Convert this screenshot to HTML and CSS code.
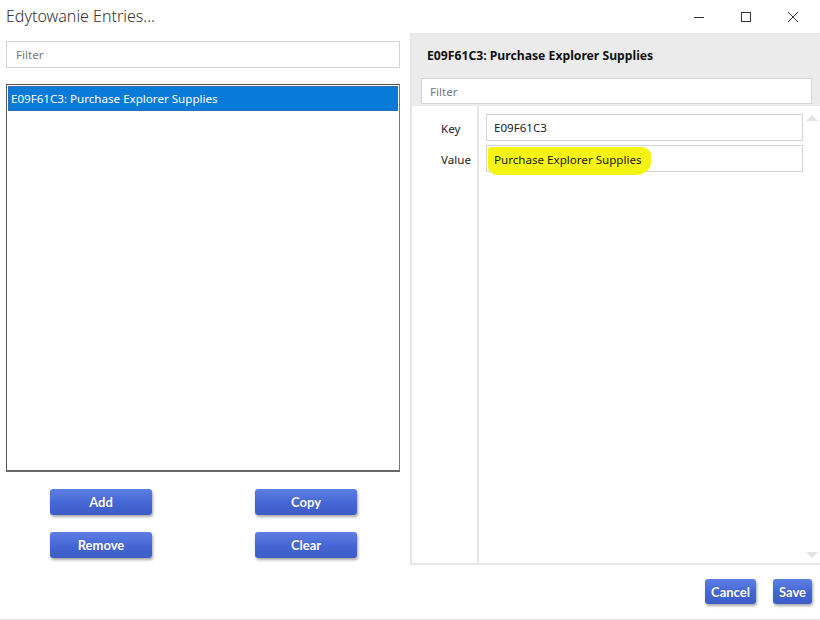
FILE: index.html
```html
<!DOCTYPE html>
<html>
<head>
<meta charset="utf-8">
<link rel="stylesheet" href="styles.css">
</head>
<body>
<div class="window">
  <div class="titlebar">
    <div class="title">Edytowanie Entries...</div>
    <div class="controls">
      <span class="ctl"><svg width="12" height="12" viewBox="0 0 12 12"><path d="M1 6.5h10" stroke="#333" stroke-width="1" fill="none"/></svg></span>
      <span class="ctl"><svg width="12" height="12" viewBox="0 0 12 12"><rect x="1.5" y="1.5" width="9" height="9" stroke="#333" stroke-width="1" fill="none"/></svg></span>
      <span class="ctl"><svg width="12" height="12" viewBox="0 0 12 12"><path d="M1 1L11 11M11 1L1 11" stroke="#333" stroke-width="1" fill="none"/></svg></span>
    </div>
  </div>
  <div class="main">
    <div class="left">
      <div class="input filter">Filter</div>
      <div class="listbox">
        <div class="row selected">E09F61C3: Purchase Explorer Supplies</div>
      </div>
      <div class="btngrid">
        <button class="btn">Add</button>
        <button class="btn">Copy</button>
        <button class="btn">Remove</button>
        <button class="btn">Clear</button>
      </div>
    </div>
    <div class="right">
      <div class="panel">
        <div class="phead">
          <div class="ptitle">E09F61C3: Purchase Explorer Supplies</div>
          <div class="input pfilter">Filter</div>
        </div>
        <div class="grid">
          <div class="labels">
            <div class="lab">Key</div>
            <div class="lab">Value</div>
          </div>
          <div class="values">
            <div class="input val">E09F61C3</div>
            <div class="input val"><span class="hl">Purchase Explorer Supplies</span></div>
          </div>
          <div class="scroll">
            <span class="tri up"></span>
            <span class="tri down"></span>
          </div>
        </div>
      </div>
      <div class="footer">
        <button class="btn sm">Cancel</button>
        <button class="btn sm">Save</button>
      </div>
    </div>
  </div>
</div>
</body>
</html>
```
FILE: styles.css
```css
html, body {
  margin: 0;
  padding: 0;
  background: #fff;
}
body {
  width: 820px;
  height: 620px;
  overflow: hidden;
  font-family: "Noto Sans", "Open Sans", sans-serif;
  color: #222;
}
.window {
  width: 820px;
  height: 619px;
  border-bottom: 1px solid #e4e4e4;
  display: flex;
  flex-direction: column;
}
.titlebar {
  height: 33px;
  display: flex;
  align-items: center;
  justify-content: space-between;
}
.title {
  padding-left: 6px;
  font-size: 16px;
  color: #333;
  font-weight: 300;
  margin-top: -1px;
}
.controls {
  display: flex;
  margin-right: 4px;
}
.ctl {
  width: 47px;
  height: 33px;
  display: flex;
  align-items: center;
  justify-content: center;
}
.main {
  flex: 1;
  display: flex;
}
.left {
  width: 394px;
  padding: 8px 10px 0 6px;
  display: flex;
  flex-direction: column;
}
.input {
  background: #fff;
  border: 1px solid #d4d4d4;
  box-sizing: border-box;
  font-size: 11.6px;
  display: flex;
  align-items: center;
  padding-left: 9px;
}
.filter {
  height: 27px;
  color: #777;
}
.listbox {
  margin-top: 16px;
  height: 388px;
  box-sizing: border-box;
  border: 1px solid #555;
  border-right-color: #777;
  border-bottom: 2px solid #666;
  padding: 1px;
}
.row {
  height: 23px;
  font-size: 11.6px;
  display: flex;
  align-items: center;
  padding-left: 2px;
}
.selected {
  background: #0a7ad8;
  color: #fff;
  border: 1px solid #2b6fb8;
}
.btngrid {
  display: grid;
  grid-template-columns: 102px 102px;
  justify-content: space-between;
  row-gap: 17px;
  padding: 17px 43px 0 44px;
}
.btn {
  height: 26px;
  border: none;
  border-radius: 3px;
  background: linear-gradient(#5d7fe3, #4466d3 55%, #3d5cc6);
  color: #fff;
  font-family: Lato, "Noto Sans", sans-serif;
  font-weight: bold;
  font-size: 13px;
  box-shadow: 1px 2px 3px rgba(0,0,0,0.35);
  padding: 0;
  text-shadow: 0 0 1px rgba(0,0,0,0.2);
}
.right {
  flex: 1;
  display: flex;
  flex-direction: column;
}
.panel {
  height: 532px;
  box-sizing: border-box;
  border-left: 2px solid #e6e6e6;
  border-top: 1px solid #e6e6e6;
  border-bottom: 2px solid #e6e6e6;
  display: flex;
  flex-direction: column;
}
.phead {
  background: #ebebeb;
  padding: 13px 8px 1px 9px;
  height: 72px;
  box-sizing: border-box;
}
.ptitle {
  font-size: 12.2px;
  font-weight: bold;
  padding-left: 6px;
  color: #111;
  margin-bottom: 14px;
}
.pfilter {
  height: 26px;
  color: #777;
  padding-left: 8px;
}
.grid {
  flex: 1;
  display: flex;
}
.labels {
  width: 65px;
  border-right: 2px solid #e6e6e6;
  padding-top: 9px;
  display: flex;
  flex-direction: column;
  gap: 4px;
}
.lab {
  height: 27px;
  font-size: 11.6px;
  display: flex;
  align-items: center;
  padding-left: 29px;
  color: #222;
}
.values {
  width: 317px;
  padding: 8px 0 0 7px;
  display: flex;
  flex-direction: column;
  gap: 4px;
}
.val {
  height: 27px;
  padding-left: 7px;
}
.hl {
  background: #f5f312;
  padding: 5px 9px 8px 6px;
  margin-left: -6px;
  margin-top: 4px;
  border-radius: 3px 10px 16px 10px / 3px 8px 12px 8px;
}
.scroll {
  flex: 1;
  display: flex;
  flex-direction: column;
  justify-content: space-between;
  align-items: center;
  padding: 9px 0 5px 0;
}
.tri {
  width: 0;
  height: 0;
  border-left: 6px solid transparent;
  border-right: 6px solid transparent;
}
.tri.up { border-bottom: 6px solid #e2e2e2; }
.tri.down { border-top: 6px solid #e2e2e2; }
.footer {
  flex: 1;
  display: flex;
  justify-content: flex-end;
  gap: 17px;
  padding: 14px 8px 0 0;
  align-items: flex-start;
}
.btn.sm {
  height: 25px;
  padding: 0 6px;
}
```
